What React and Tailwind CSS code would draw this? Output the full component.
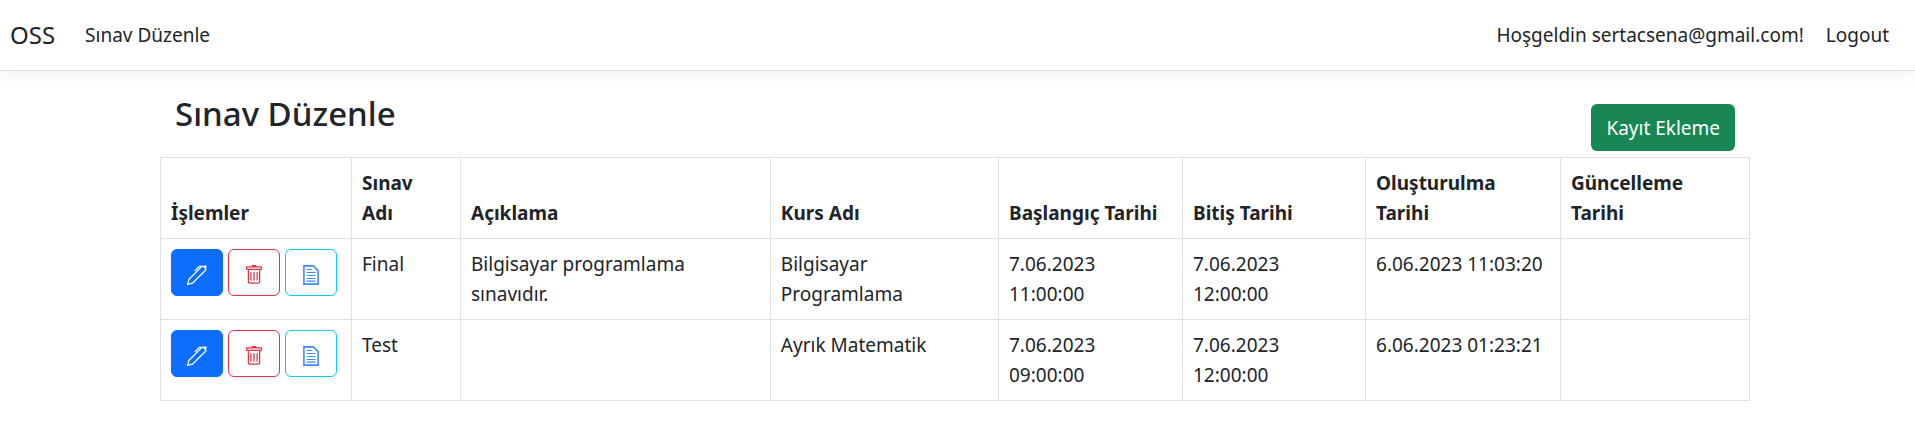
import React from "react";
import { BsPen } from "react-icons/bs";

const columns = [
  { label: "İşlemler", width: "w-[12.02%]" },
  { label: "Sınav\nAdı", width: "w-[6.86%]" },
  { label: "Açıklama", width: "w-[19.5%]" },
  { label: "Kurs Adı", width: "w-[14.36%]" },
  { label: "Başlangıç Tarihi", width: "w-[11.58%]" },
  { label: "Bitiş Tarihi", width: "w-[11.52%]" },
  { label: "Oluşturulma\nTarihi", width: "w-[12.27%]" },
  { label: "Güncelleme\nTarihi", width: "w-[11.89%]" },
];

const exams = [
  {
    name: "Final",
    description: "Bilgisayar programlama\nsınavıdır.",
    course: "Bilgisayar\nProgramlama",
    start: "7.06.2023\n11:00:00",
    end: "7.06.2023\n12:00:00",
    created: "6.06.2023 11:03:20",
    updated: "",
  },
  {
    name: "Test",
    description: "",
    course: "Ayrık Matematik",
    start: "7.06.2023\n09:00:00",
    end: "7.06.2023\n12:00:00",
    created: "6.06.2023 01:23:21",
    updated: "",
  },
];

function TrashIcon() {
  return (
    <svg viewBox="0 0 16 16" className="h-5 w-5" fill="currentColor" aria-hidden="true">
      <path d="M5.5 5.5A.5.5 0 0 1 6 6v6a.5.5 0 0 1-1 0V6a.5.5 0 0 1 .5-.5zm2.5 0a.5.5 0 0 1 .5.5v6a.5.5 0 0 1-1 0V6a.5.5 0 0 1 .5-.5zm3 .5a.5.5 0 0 0-1 0v6a.5.5 0 0 0 1 0V6z" />
      <path
        fillRule="evenodd"
        d="M14.5 3a1 1 0 0 1-1 1H13v9a2 2 0 0 1-2 2H5a2 2 0 0 1-2-2V4h-.5a1 1 0 0 1-1-1V2a1 1 0 0 1 1-1H6a1 1 0 0 1 1-1h2a1 1 0 0 1 1 1h3.5a1 1 0 0 1 1 1v1zM4.118 4 4 4.059V13a1 1 0 0 0 1 1h6a1 1 0 0 0 1-1V4.059L11.882 4H4.118zM2.5 3V2h11v1h-11z"
      />
    </svg>
  );
}

function DocumentIcon() {
  return (
    <svg viewBox="0 0 20 20" className="h-5 w-5" fill="none" stroke="currentColor" aria-hidden="true">
      <path d="M2.9 0.9h9.4l4.8 4.8v13.4H2.9z" strokeWidth="1.6" />
      <path d="M5.5 4.5h5.5M5.5 7.5h9M5.5 10.5h9M5.5 13.5h9M5.5 16.2h9" strokeWidth="1.2" />
    </svg>
  );
}

function ActionButton({ label, className, children }) {
  return (
    <button
      type="button"
      aria-label={label}
      className={`flex h-[47px] w-[52px] items-center justify-center rounded-md border pt-1 ${className}`}
    >
      {children}
    </button>
  );
}

function Header() {
  return (
    <header className="border-b border-[#dee2e6] bg-white shadow-[0_5px_15px_rgba(0,0,0,0.05)]">
      <nav className="flex h-[70px] items-center px-[10px]">
        <a href="#" className="text-2xl">OSS</a>
        <a href="#" className="ml-[30px]">Sınav Düzenle</a>
        <div className="ml-auto flex items-center gap-[22px] pr-4">
          <a href="#">Hoşgeldin sertacsena@gmail.com!</a>
          <button type="button">Logout</button>
        </div>
      </nav>
    </header>
  );
}

export default function App() {
  return (
    <div className="bg-white font-['Noto_Sans',sans-serif] text-[19px] leading-[30px] text-[#212529]">
      <Header />
      <main className="pr-[5px]">
        <div className="mx-auto w-full max-w-[1590px]">
          <div className="flex items-start justify-between px-[15px] pt-[22px] pb-[6px]">
            <h1 className="text-[33px] leading-[42px] font-medium">Sınav Düzenle</h1>
            <button
              type="button"
              className="mt-[11px] h-[47px] rounded-md bg-[#198754] px-[15px] text-white"
            >
              Kayıt Ekleme
            </button>
          </div>
          <table className="w-full table-fixed border-collapse">
            <thead>
              <tr>
                {columns.map((c) => (
                  <th
                    key={c.label}
                    scope="col"
                    className={`border border-[#dee2e6] p-[10px] text-left align-bottom font-bold whitespace-pre-line ${c.width}`}
                  >
                    {c.label}
                  </th>
                ))}
              </tr>
            </thead>
            <tbody>
              {exams.map((e) => (
                <tr key={e.name}>
                  <td className="border border-[#dee2e6] p-[10px] align-top">
                    <div className="flex gap-[5px]">
                      <ActionButton label="Düzenle" className="border-[#0d6efd] bg-[#0d6efd] text-white">
                        <BsPen className="h-5 w-5" />
                      </ActionButton>
                      <ActionButton label="Sil" className="border-[#dc3545] text-[#dc3545]">
                        <TrashIcon />
                      </ActionButton>
                      <ActionButton label="Sorular" className="border-[#0dcaf0] text-[#3d8bfd]">
                        <DocumentIcon />
                      </ActionButton>
                    </div>
                  </td>
                  {[e.name, e.description, e.course, e.start, e.end, e.created, e.updated].map((v, i) => (
                    <td key={i} className="border border-[#dee2e6] p-[10px] align-top whitespace-pre-line">
                      {v}
                    </td>
                  ))}
                </tr>
              ))}
            </tbody>
          </table>
        </div>
      </main>
    </div>
  );
}
